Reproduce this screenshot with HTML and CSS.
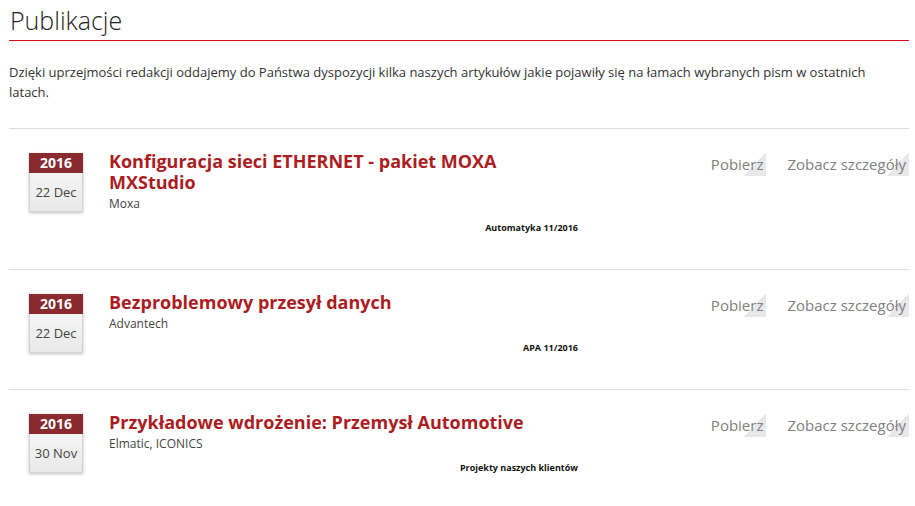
FILE: index.html
```html
<!DOCTYPE html>
<html lang="pl">
<head>
<meta charset="utf-8">
<title>Publikacje</title>
<link rel="stylesheet" href="styles.css">
</head>
<body>
<div class="page">
  <h1 class="page-title">Publikacje</h1>
  <p class="intro">Dzięki uprzejmości redakcji oddajemy do Państwa dyspozycji kilka naszych artykułów jakie pojawiły się na łamach wybranych pism w ostatnich latach.</p>

  <div class="list">
    <div class="item">
      <div class="date">
        <div class="year">2016</div>
        <div class="day">22 Dec</div>
      </div>
      <div class="body">
        <h2 class="title">Konfiguracja sieci ETHERNET - pakiet MOXA MXStudio</h2>
        <div class="company">Moxa</div>
        <div class="source">Automatyka 11/2016</div>
      </div>
      <div class="actions">
        <a class="link" href="#">Pobierz</a>
        <a class="link" href="#">Zobacz szczegóły</a>
      </div>
    </div>

    <div class="item">
      <div class="date">
        <div class="year">2016</div>
        <div class="day">22 Dec</div>
      </div>
      <div class="body">
        <h2 class="title">Bezproblemowy przesył danych</h2>
        <div class="company">Advantech</div>
        <div class="source">APA 11/2016</div>
      </div>
      <div class="actions">
        <a class="link" href="#">Pobierz</a>
        <a class="link" href="#">Zobacz szczegóły</a>
      </div>
    </div>

    <div class="item">
      <div class="date">
        <div class="year">2016</div>
        <div class="day">30 Nov</div>
      </div>
      <div class="body">
        <h2 class="title">Przykładowe wdrożenie: Przemysł Automotive</h2>
        <div class="company">Elmatic, ICONICS</div>
        <div class="source">Projekty naszych klientów</div>
      </div>
      <div class="actions">
        <a class="link" href="#">Pobierz</a>
        <a class="link" href="#">Zobacz szczegóły</a>
      </div>
    </div>
  </div>
</div>
</body>
</html>
```
FILE: styles.css
```css
* { box-sizing: border-box; }
html, body { margin: 0; padding: 0; background: #fff; }
body {
  font-family: "Open Sans", "Noto Sans", "DejaVu Sans", sans-serif;
  color: #333;
}
.page {
  width: 900px;
  margin-left: 9px;
}
.page-title {
  margin: 0;
  padding: 2px 0 0 1px;
  font-family: "Open Sans Light", "Open Sans", sans-serif;
  font-size: 25px;
  line-height: 36px;
  font-weight: 300;
  color: #222;
  border-bottom: 1px solid #e30613;
  height: 41px;
}
.intro {
  margin: 21px 0 26px;
  padding-right: 30px;
  font-size: 13px;
  line-height: 20px;
  color: #333;
}
.item {
  display: flex;
  align-items: flex-start;
  border-top: 1px solid #ddd;
  padding: 22px 0 0 20px;
}
.date {
  width: 54px;
  margin-top: 2px;
  flex: none;
  border: 1px solid #d4d4d4;
  background: linear-gradient(to bottom, #fafafa, #e9e9e9);
  box-shadow: 0 1px 3px rgba(0,0,0,0.25);
  text-align: center;
}
.year {
  background: #892a2e;
  color: #fff;
  font-weight: 700;
  font-size: 14px;
  line-height: 20px;
  margin: -1px -1px 0;
}
.day {
  font-size: 13px;
  color: #444;
  line-height: 38px;
  height: 38px;
}
.body {
  width: 470px;
  margin-left: 26px;
  flex: none;
  padding-bottom: 35px;
}
.title {
  margin: 0;
  font-size: 18px;
  line-height: 21px;
  font-weight: 700;
  color: #ab1d22;
}
.company {
  font-size: 12px;
  line-height: 18px;
  color: #444;
  margin-top: 2px;
}
.source {
  text-align: right;
  font-size: 9px;
  font-weight: 700;
  line-height: 12px;
  color: #111;
  margin-top: 9px;
  padding-right: 1px;
}
.actions {
  flex: 1;
  display: flex;
  justify-content: flex-end;
  gap: 21px;
  margin-top: 1px;
}
.link {
  display: block;
  font-size: 15px;
  line-height: 24px;
  height: 24px;
  color: #808080;
  text-decoration: none;
  padding-right: 3px;
  background: linear-gradient(to bottom right, rgba(232,232,232,0) 50%, #e8e8e8 50%) right bottom / 22px 24px no-repeat;
}
```
